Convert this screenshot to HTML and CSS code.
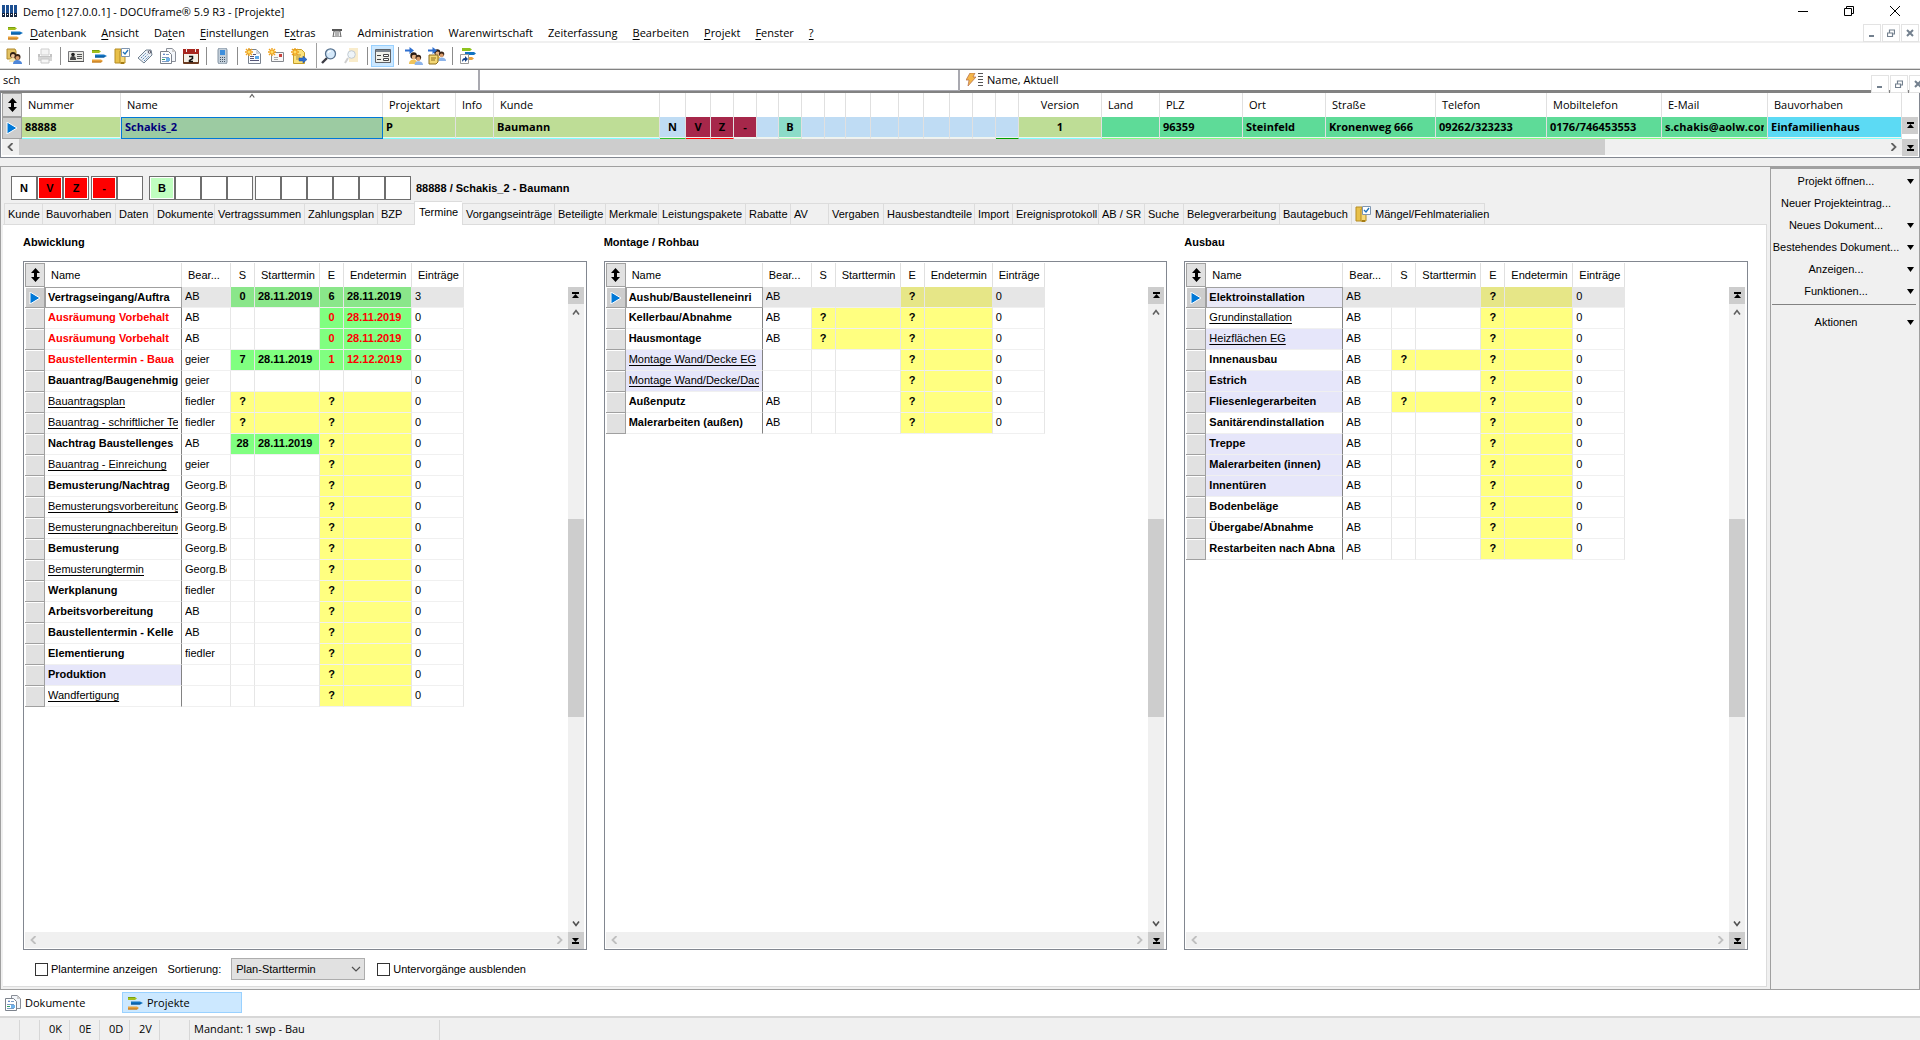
FILE: index.html
```html
<!DOCTYPE html>
<html lang="de">
<head>
<meta charset="utf-8">
<title>DOCUframe - Projekte</title>
<link rel="stylesheet" href="styles.css">
</head>
<body>
<svg class="sprite" aria-hidden="true">
  <symbol id="bars" viewBox="0 0 16 16"><path d="M1 2h7l2 1.500-2 1.500H1z" fill="#a4bf1c"/><path d="M1 2h7v1H1z" fill="#78a010"/><path d="M4 6.500h9l3 1.500-3 1.500H4z" fill="#1273c2"/><path d="M4 8.500h10l-1 1H4z" fill="#075391"/><path d="M1 11.500h9l2 1.500-2 1.500H1z" fill="#eaa23b"/><path d="M1 13.500h10l-1 1H1z" fill="#b8741e"/></symbol>
  <symbol id="app" viewBox="0 0 15 12"><path d="M0 0h3v8H0zM4 0h3v8H4zM8 0h3v8H8zM12 0h3v8h-3z" fill="#1d4f91"/><path d="M0 8h3v4H0zM4 8h3v4H4zM8 8h3v4H8zM12 8h3v4h-3z" fill="#14233c"/><path d="M1 9h1v1H1zM5 9h1v1H5zM9 9h1v1H9zM13 9h1v1h-1z" fill="#fff"/></symbol>
  <symbol id="people" viewBox="0 0 16 16"><circle cx="6" cy="6" r="3.500" fill="#2b1c14"/><circle cx="6.500" cy="7.500" r="2.500" fill="#e5b283"/><path d="M1 15c0-4 3-5 5-5s4 2 4 5z" fill="#f0c45a"/><circle cx="11" cy="8" r="3" fill="#3a2415"/><circle cx="11" cy="9.500" r="2.200" fill="#d99c6c"/><path d="M7 16c0-3 2-4 4-4s5 1 5 4z" fill="#8db4ea"/></symbol>
  <symbol id="users" viewBox="0 0 16 16"><path d="M1 1h8l1 2v8H1z" fill="#e3c263" stroke="#b08a30"/><circle cx="7" cy="7" r="3" fill="#2b1c14"/><circle cx="7" cy="8" r="2" fill="#f0c69b"/><path d="M3 14c0-3 2-4 4-4s4 1 4 4z" fill="#f5e6b0"/><circle cx="11.500" cy="9" r="3" fill="#3a2415"/><circle cx="11.500" cy="10" r="2" fill="#d99c6c"/><path d="M7 16c0-3 2-4 4-4s5 1 5 4z" fill="#4e86d8"/></symbol>
  <symbol id="printer" viewBox="0 0 16 16"><path d="M4 1h8v6H4z" fill="#f4f4f4" stroke="#cfcfcf"/><path d="M1 6h2v2h10V6h2v6H1z" fill="#c4c4c4"/><path d="M1 9h14v4H1z" fill="#d6d6d6"/><path d="M4 11h8v4H4z" fill="#f6f6f6" stroke="#c8c8c8"/></symbol>
  <symbol id="card" viewBox="0 0 16 16"><path d="M.5 3.500h15v10H.5z" fill="#e9e9e4" stroke="#77777a"/><path d="M0 13h16v1H0z" fill="#555"/><circle cx="5" cy="6.500" r="1.800" fill="#222"/><path d="M2 12c0-3 1-4 3-4s3 1 3 4z" fill="#444"/><path d="M9 6h5v1H9zM9 8h5v1H9zM9 10h5v1H9z" fill="#555"/></symbol>
  <symbol id="folder" viewBox="0 0 16 16"><path d="M1 1h6v14H1z" fill="#e8c04a" stroke="#b58c23"/><path d="M6 3h5v12H6z" fill="#f6d877" stroke="#b58c23"/><path d="M7.500.5h8v8h-8z" fill="#fff" stroke="#8096b0"/><path d="m9 4 2 2 3-4" fill="none" stroke="#1f71b8" stroke-width="1.300"/><path d="M7 14h3v2H7z" fill="#a67c14"/></symbol>
  <symbol id="tag" viewBox="0 0 16 16"><path d="m1 10 8-8 5 0 1 5-8 8z" fill="#eef2f7" stroke="#70808f"/><circle cx="12.500" cy="4" r="1.300" fill="#fff" stroke="#556"/><path d="m4 10 5-5M5.500 11.500l5-5M7 13l5-5" stroke="#5b86b5" stroke-dasharray="2 1"/></symbol>
  <symbol id="docs" viewBox="0 0 16 16"><path d="M6.500.5h6l3 3v10h-9z" fill="#f3f6fa" stroke="#8a8f98"/><path d="M12 0v4h4" fill="#ccc"/><path d="M.5 3.500h8l3 3v9H.5z" fill="#fff" stroke="#7c828c"/><path d="m3 7 1-2 1 2z" fill="#36b"/><path d="M6 6h3v1H6zM2 9h7v1H2zM2 13h7v1H2z" fill="#7c9cc4"/><path d="M2 11h3v1H2z" fill="#2a9e64"/><path d="M6 10h4v3H6z" fill="#6fb3ec"/></symbol>
  <symbol id="cal" viewBox="0 0 16 16"><path d="M.5 1.500h15v14H.5z" fill="#f4f0e6" stroke="#6b3a20"/><path d="M0 1h16v5H0z" fill="#a8261e"/><path d="M3 0h1v4H3zM12 0h1v4h-1z" fill="#eee"/><path d="M1 15h14" stroke="#6b3a20" stroke-width="2"/><path d="M6 8.500h3.500v2l-3 2v1H10" fill="none" stroke="#111" stroke-width="1.500"/></symbol>
  <symbol id="mobile" viewBox="0 0 16 16"><rect x="4" y="0" width="9" height="16" rx="2" fill="#c3cfda" stroke="#8494a3"/><path d="M6 2h5v5H6z" fill="#3f8fdc"/><path d="M6 9h1v1H6zM8 9h1v1H8zM10 9h1v1h-1zM6 11h1v1H6zM8 11h1v1H8zM10 11h1v1h-1zM6 13h1v1H6zM8 13h1v1H8zM10 13h1v1h-1z" fill="#4a5968"/></symbol>
  <symbol id="star" viewBox="0 0 8 8"><path d="M4 0v8M0 4h8M1 1l6 6M7 1 1 7" stroke="#f0a21c" stroke-width="1.400"/><circle cx="4" cy="4" r="1.500" fill="#ffe06a"/></symbol>
  <symbol id="newdoc" viewBox="0 0 16 16"><path d="M3.500 1.500h8l4 4v10h-12z" fill="#fafcff" stroke="#7a828e"/><path d="M11 1v5h5" fill="#ccd3dc"/><path d="M8 6h3v1H8zM5 8h4v1H5zM5 10h4v1H5zM5 12h9v1H5z" fill="#557"/><path d="M10 8h4v3h-4z" fill="#5aa8ea"/><use href="#star" width="8" height="8"/></symbol>
  <symbol id="newmail" viewBox="0 0 16 16"><path d="M3.500 4.500h12v9h-12z" fill="#f7f7f7" stroke="#85888e"/><path d="M11 6h3v3h-3z" fill="#c8413c"/><path d="M6 9h4v1H6zM6 11h4v1H6z" fill="#aaa"/><use href="#star" width="8" height="8"/></symbol>
  <symbol id="newnote" viewBox="0 0 16 16"><path d="M2.500 1.500h8l3 3v11h-11z" fill="#fbe27c" stroke="#c79f2a"/><path d="M5 7h5M5 9h4M5 11h3" stroke="#b99438"/><path d="M8 10h4V8l4 3.500-4 3.500v-2H8z" fill="#2e6fd0" stroke="#174a9c" stroke-width=".5"/><use href="#star" width="8" height="8"/></symbol>
  <symbol id="loupe" viewBox="0 0 16 16"><path d="m6 10-5 5" stroke="#3c3c44" stroke-width="2.400"/><circle cx="9.500" cy="5.800" r="5" fill="#d5e9fa" stroke="#56718e" stroke-width="1.300"/><path d="M7 5c.5-2 2-2 3-2" stroke="#fff" stroke-width="1.200" fill="none"/></symbol>
  <symbol id="loupeoff" viewBox="0 0 16 16"><path d="M5 0h9v14H5z" fill="#f9eccb"/><path d="m4 10-3 5" stroke="#cfcfcf" stroke-width="2"/><circle cx="7.500" cy="6.500" r="3.800" fill="#eef4f8" stroke="#c2cbd2"/></symbol>
  <symbol id="form" viewBox="0 0 16 16"><path d="M.5 1.500h15v13H.5z" fill="#f1f1ea" stroke="#5f6368"/><path d="M1 2h14v2H1z" fill="#7c858e"/><path d="M2 7h4v1H2zM2 11h4v1H2z" fill="#444"/><path d="M8.500 6.500h5v2h-5zM8.500 10.500h5v2h-5z" fill="#fff" stroke="#444"/></symbol>
  <symbol id="go" viewBox="0 0 9 7"><path d="M0 2.500h4.500V0L9 3.500 4.500 7V4.500H0z" fill="#2e6fd0"/></symbol>
  <symbol id="gopeople" viewBox="0 0 18 18"><use href="#people" x="3" y="3" width="15" height="15"/><use href="#go" width="9" height="7"/></symbol>
  <symbol id="gonote" viewBox="0 0 18 18"><use href="#people" x="4" y="0" width="14" height="14"/><path d="M1 8h9v7l-2 2H1z" fill="#f3d774" stroke="#8d6f1c"/><path d="M3 11h5M3 13h4" stroke="#8d6f1c"/><use href="#go" width="9" height="7"/></symbol>
  <symbol id="shortcut" viewBox="0 0 16 16"><path d="M2 0h8l2 1.500L10 3H2z" fill="#8fc31f"/><path d="M5 4h9l2 1.500L14 7H5z" fill="#1273c2"/><path d="M7 9h5l2 1.500-2 1.500H7z" fill="#eaa23b"/><path d="M.5 6.500h8v9h-8z" fill="#fff" stroke="#999"/><path d="M2 14c0-3 1-4 3-4V8l3 3-3 3v-2c-2 0-2 1-3 2z" fill="#113f86"/></symbol>
  <symbol id="phone" viewBox="0 0 10 9"><path d="M0 1h10v2H0z" fill="#555"/><path d="M2 3h6l1 6H1z" fill="#eee" stroke="#666"/><path d="M3 5h4M3 7h4" stroke="#777"/></symbol>
  <symbol id="flash" viewBox="0 0 10 14"><path d="M4 0h5L7 4h3L2 13l1-6H0z" fill="#f4b64a" stroke="#b36b45" stroke-width=".7"/></symbol>
  <symbol id="updown" viewBox="0 0 9 14"><path d="M4.500 0 9 5H6v4h3l-4.500 5L0 9h3V5H0z"/></symbol>
  <symbol id="current" viewBox="0 0 12 12"><path d="M1 0v12l10-6z" fill="#0078d7" stroke="#fff"/></symbol>
  <symbol id="totop" viewBox="0 0 7 7"><path d="M0 0h7v2H0zM3.500 2 7 6H0z"/></symbol>
  <symbol id="toend" viewBox="0 0 7 7"><path d="M0 5h7v2H0zM3.500 5 7 1H0z"/></symbol>
  <symbol id="up" viewBox="0 0 8 8"><path d="M1 6l3-4 3 4" fill="none" stroke="#606060" stroke-width="1.600"/></symbol>
  <symbol id="down" viewBox="0 0 8 8"><path d="M1 2l3 4 3-4" fill="none" stroke="#505050" stroke-width="1.600"/></symbol>
  <symbol id="left" viewBox="0 0 8 8"><path d="M6 0 2 4l4 4" fill="none" stroke="currentColor" stroke-width="1.800"/></symbol>
  <symbol id="right" viewBox="0 0 8 8"><path d="m2 0 4 4-4 4" fill="none" stroke="currentColor" stroke-width="1.800"/></symbol>
  <symbol id="chevron" viewBox="0 0 10 9"><path d="m1 2 4 4 4-4" fill="none" stroke="#505050" stroke-width="1.200"/></symbol>
  <symbol id="tri" viewBox="0 0 7 5"><path d="M0 0h7L3.500 5z"/></symbol>
  <symbol id="wmin" viewBox="0 0 10 10"><path d="M0 5h10v1H0z"/></symbol>
  <symbol id="wmax" viewBox="0 0 10 10"><path d="M.5 2.500h7v7h-7zM2.500 2V.5h7v7H8" fill="none" stroke="#000"/></symbol>
  <symbol id="wclose" viewBox="0 0 10 10"><path d="m0 0 10 10M10 0 0 10" stroke="#000"/></symbol>
  <symbol id="mmin" viewBox="0 0 8 8"><path d="M1 6h5v2H1z" fill="#73808e"/></symbol>
  <symbol id="mmax" viewBox="0 0 8 8"><path d="M.5 4h5v3.500h-5zM2.500 3.500V1h5v4H6M.5 4h5M2.500 1h5" fill="none" stroke="#73808e" stroke-width="1.200"/></symbol>
  <symbol id="mclose" viewBox="0 0 8 8"><path d="m1 1 6 6M7 1 1 7" stroke="#73808e" stroke-width="2"/></symbol>
</svg>

<header class="titlebar">
  <svg class="app-icon"><use href="#app"/></svg>
  <h1>Demo [127.0.0.1] - DOCUframe® 5.9 R3 - [Projekte]</h1>
  <div class="win-buttons">
    <button aria-label="Minimieren"><svg><use href="#wmin"/></svg></button>
    <button aria-label="Verkleinern"><svg><use href="#wmax"/></svg></button>
    <button aria-label="Schließen"><svg><use href="#wclose"/></svg></button>
  </div>
</header>

<nav class="menubar">
  <svg class="i16"><use href="#bars"/></svg>
  <button><u>D</u>atenbank</button><button><u>A</u>nsicht</button><button>Da<u>t</u>en</button><button><u>E</u>instellungen</button><button>E<u>x</u>tras</button>
  <button aria-label="Telefon"><svg class="phone"><use href="#phone"/></svg></button>
  <button>Administration</button><button>Warenwirtschaft</button><button>Zeiterfassung</button><button><u>B</u>earbeiten</button><button><u>P</u>rojekt</button><button><u>F</u>enster</button><button><u>?</u></button>
  <div class="mdi">
    <button aria-label="Minimieren"><svg><use href="#mmin"/></svg></button>
    <button aria-label="Wiederherstellen"><svg><use href="#mmax"/></svg></button>
    <button aria-label="Schließen"><svg><use href="#mclose"/></svg></button>
  </div>
</nav>

<div class="toolbar">
  <button aria-label="Benutzer"><svg class="i16"><use href="#users"/></svg></button><i></i>
  <button aria-label="Drucken"><svg class="i16"><use href="#printer"/></svg></button><i></i>
  <button aria-label="Adressen"><svg class="i16"><use href="#card"/></svg></button>
  <button aria-label="Projekte"><svg class="i16"><use href="#bars"/></svg></button>
  <button aria-label="Mängel"><svg class="i16"><use href="#folder"/></svg></button>
  <button aria-label="Artikel"><svg class="i16"><use href="#tag"/></svg></button>
  <button aria-label="Dokumente"><svg class="i16"><use href="#docs"/></svg></button>
  <button aria-label="Kalender"><svg class="i16"><use href="#cal"/></svg></button><i></i>
  <button aria-label="Mobil"><svg class="i16"><use href="#mobile"/></svg></button><i></i>
  <button aria-label="Neues Dokument"><svg class="i16"><use href="#newdoc"/></svg></button>
  <button aria-label="Neue E-Mail"><svg class="i16"><use href="#newmail"/></svg></button>
  <button aria-label="Neue Notiz"><svg class="i16"><use href="#newnote"/></svg></button><i class="tall"></i>
  <button aria-label="Suchen"><svg class="i16"><use href="#loupe"/></svg></button>
  <button aria-label="Weitersuchen"><svg class="i16"><use href="#loupeoff"/></svg></button><i></i>
  <button class="on" aria-label="Formularansicht"><svg class="i16"><use href="#form"/></svg></button><i></i>
  <button aria-label="Zu Adresse"><svg class="i18"><use href="#gopeople"/></svg></button>
  <button aria-label="Zu Notiz"><svg class="i18"><use href="#gonote"/></svg></button><i></i>
  <button aria-label="Verknüpfung"><svg class="i16"><use href="#shortcut"/></svg></button>
</div>

<div class="filters">
  <input value="sch" aria-label="Suchbegriff 1">
  <input aria-label="Suchbegriff 2">
  <div class="sort-by"><svg class="flash"><use href="#flash"/></svg><span class="grip"></span><span>Name, Aktuell</span></div>
  <div class="mdi over">
    <button aria-label="Minimieren"><svg><use href="#mmin"/></svg></button>
    <button aria-label="Wiederherstellen"><svg><use href="#mmax"/></svg></button>
    <button class="cut" aria-label="Schließen"><svg><use href="#mclose"/></svg></button>
  </div>
</div>

<section class="projects">
  <div class="projects-body">
    <table class="pt">
      <colgroup><col class="w20"><col class="w99"><col class="w262"><col class="w73"><col class="w38"><col class="w166"><col class="w26"><col class="w25"><col class="w23"><col class="w23"><col class="w22"><col class="w23"><col class="w23"><col class="w21"><col class="w25"><col class="w28"><col class="w25"><col class="w26"><col class="w23"><col class="w23"><col class="w23"><col class="w83"><col class="w58"><col class="w83"><col class="w83"><col class="w110"><col class="w111"><col class="w115"><col class="w106"><col></colgroup>
      <thead><tr><th class="corner"><svg><use href="#updown"/></svg></th><th>Nummer</th><th class="sorted">Name<svg><use href="#up"/></svg></th><th>Projektart</th><th>Info</th><th>Kunde</th><th></th><th></th><th></th><th></th><th></th><th></th><th></th><th></th><th></th><th></th><th></th><th></th><th></th><th></th><th></th><th class="mid">Version</th><th>Land</th><th>PLZ</th><th>Ort</th><th>Straße</th><th>Telefon</th><th>Mobiltelefon</th><th>E-Mail</th><th>Bauvorhaben</th></tr></thead>
      <tbody><tr><th class="rowhead"><svg><use href="#current"/></svg></th><td class="olive">88888</td><td class="picked">Schakis_2</td><td class="olive">P</td><td class="olive"></td><td class="olive">Baumann</td><td class="sky mid ok">N</td><td class="wine mid">V</td><td class="wine mid">Z</td><td class="wine mid plain">-</td><td class="sky"></td><td class="mint mid">B</td><td class="sky"></td><td class="sky"></td><td class="sky"></td><td class="sky"></td><td class="sky"></td><td class="sky"></td><td class="sky"></td><td class="sky"></td><td class="sky done"></td><td class="olive mid">1</td><td class="green"></td><td class="green">96359</td><td class="green">Steinfeld</td><td class="green">Kronenweg 666</td><td class="green">09262/323233</td><td class="green">0176/746453553</td><td class="green"><span>s.chakis@aolw.com</span></td><td class="cyan">Einfamilienhaus</td></tr></tbody>
    </table>
    <div class="pt-side"><button class="jump" aria-label="Zum Anfang"><svg><use href="#totop"/></svg></button></div>
  </div>
  <div class="hscroll live"><svg><use href="#left"/></svg><span class="track"><span class="hthumb"></span></span><svg><use href="#right"/></svg><button class="jump" aria-label="Zum Ende"><svg><use href="#toend"/></svg></button></div>
</section>

<main class="workspace">
  <div class="detail">
    <div class="status-line">
      <div class="boxes"><span>N</span><span class="red">V</span><span class="red">Z</span></div>
      <div class="boxes"><span class="red">-</span><span></span></div>
      <div class="boxes apart"><span class="pale">B</span><span></span><span></span><span></span></div>
      <div class="boxes"><span></span><span></span><span></span><span></span><span></span><span></span></div>
      <h2>88888 / Schakis_2 - Baumann</h2>
    </div>
    <div class="tabs" role="tablist">
      <button role="tab">Kunde</button><button role="tab">Bauvorhaben</button><button role="tab">Daten</button><button role="tab">Dokumente</button><button role="tab">Vertragssummen</button><button role="tab">Zahlungsplan</button><button role="tab">BZP</button><button role="tab" aria-selected="true">Termine</button><button role="tab">Vorgangseinträge</button><button role="tab">Beteiligte</button><button role="tab">Merkmale</button><button role="tab">Leistungspakete</button><button role="tab">Rabatte</button><button role="tab">AV</button><button role="tab">Vergaben</button><button role="tab">Hausbestandteile</button><button role="tab">Import</button><button role="tab">Ereignisprotokoll</button><button role="tab">AB / SR</button><button role="tab">Suche</button><button role="tab">Belegverarbeitung</button><button role="tab">Bautagebuch</button><button role="tab"><svg class="i16"><use href="#folder"/></svg>Mängel/Fehlmaterialien</button>
    </div>
    <div class="pane">
      <div class="lists">
        <section class="list">
          <h3>Abwicklung</h3>
          <div class="frame">
            <div class="rows">
              <table class="tt">
                <thead><tr><th class="corner"><svg><use href="#updown"/></svg></th><th>Name</th><th>Bear...</th><th>S</th><th>Starttermin</th><th>E</th><th>Endetermin</th><th>Einträge</th></tr></thead>
                <tbody>
                <tr class="sel"><th><svg><use href="#current"/></svg></th><td><span>Vertragseingang/Auftra</span></td><td><span>AB</span></td><td class="g">0</td><td class="g">28.11.2019</td><td class="g">6</td><td class="g">28.11.2019</td><td>3</td></tr>
                <tr><th></th><td class="r"><span>Ausräumung Vorbehalt</span></td><td><span>AB</span></td><td></td><td></td><td class="g r">0</td><td class="g r">28.11.2019</td><td>0</td></tr>
                <tr><th></th><td class="r"><span>Ausräumung Vorbehalt</span></td><td><span>AB</span></td><td></td><td></td><td class="g r">0</td><td class="g r">28.11.2019</td><td>0</td></tr>
                <tr><th></th><td class="r"><span>Baustellentermin - Baua</span></td><td><span>geier</span></td><td class="g">7</td><td class="g">28.11.2019</td><td class="g r">1</td><td class="g r">12.12.2019</td><td>0</td></tr>
                <tr><th></th><td><span>Bauantrag/Baugenehmig</span></td><td><span>geier</span></td><td></td><td></td><td></td><td></td><td>0</td></tr>
                <tr><th></th><td class="sub"><span>Bauantragsplan</span></td><td><span>fiedler</span></td><td class="y">?</td><td class="y"></td><td class="y">?</td><td class="y"></td><td>0</td></tr>
                <tr><th></th><td class="sub"><span>Bauantrag - schriftlicher Te</span></td><td><span>fiedler</span></td><td class="y">?</td><td class="y"></td><td class="y">?</td><td class="y"></td><td>0</td></tr>
                <tr><th></th><td><span>Nachtrag Baustellenges</span></td><td><span>AB</span></td><td class="g">28</td><td class="g">28.11.2019</td><td class="y">?</td><td class="y"></td><td>0</td></tr>
                <tr><th></th><td class="sub"><span>Bauantrag - Einreichung</span></td><td><span>geier</span></td><td></td><td></td><td class="y">?</td><td class="y"></td><td>0</td></tr>
                <tr><th></th><td><span>Bemusterung/Nachtrag</span></td><td><span>Georg.Be</span></td><td></td><td></td><td class="y">?</td><td class="y"></td><td>0</td></tr>
                <tr><th></th><td class="sub"><span>Bemusterungsvorbereitung</span></td><td><span>Georg.Be</span></td><td></td><td></td><td class="y">?</td><td class="y"></td><td>0</td></tr>
                <tr><th></th><td class="sub"><span>Bemusterungnachbereitung</span></td><td><span>Georg.Be</span></td><td></td><td></td><td class="y">?</td><td class="y"></td><td>0</td></tr>
                <tr><th></th><td><span>Bemusterung</span></td><td><span>Georg.Be</span></td><td></td><td></td><td class="y">?</td><td class="y"></td><td>0</td></tr>
                <tr><th></th><td class="sub"><span>Bemusterungtermin</span></td><td><span>Georg.Be</span></td><td></td><td></td><td class="y">?</td><td class="y"></td><td>0</td></tr>
                <tr><th></th><td><span>Werkplanung</span></td><td><span>fiedler</span></td><td></td><td></td><td class="y">?</td><td class="y"></td><td>0</td></tr>
                <tr><th></th><td><span>Arbeitsvorbereitung</span></td><td><span>AB</span></td><td></td><td></td><td class="y">?</td><td class="y"></td><td>0</td></tr>
                <tr><th></th><td><span>Baustellentermin - Kelle</span></td><td><span>AB</span></td><td></td><td></td><td class="y">?</td><td class="y"></td><td>0</td></tr>
                <tr><th></th><td><span>Elementierung</span></td><td><span>fiedler</span></td><td></td><td></td><td class="y">?</td><td class="y"></td><td>0</td></tr>
                <tr><th></th><td class="lav"><span>Produktion</span></td><td></td><td></td><td></td><td class="y">?</td><td class="y"></td><td>0</td></tr>
                <tr><th></th><td class="sub"><span>Wandfertigung</span></td><td></td><td></td><td></td><td class="y">?</td><td class="y"></td><td>0</td></tr>
                </tbody>
              </table>
              <div class="vscroll"><button class="jump" aria-label="Zum Anfang"><svg><use href="#totop"/></svg></button><svg><use href="#up"/></svg><span class="vtrack"><span class="vthumb"></span></span><svg><use href="#down"/></svg></div>
            </div>
            <div class="hscroll"><svg><use href="#left"/></svg><span class="track"></span><svg><use href="#right"/></svg><button class="jump" aria-label="Zum Ende"><svg><use href="#toend"/></svg></button></div>
          </div>
        </section>
        <section class="list">
          <h3>Montage / Rohbau</h3>
          <div class="frame">
            <div class="rows">
              <table class="tt">
                <thead><tr><th class="corner"><svg><use href="#updown"/></svg></th><th>Name</th><th>Bear...</th><th>S</th><th>Starttermin</th><th>E</th><th>Endetermin</th><th>Einträge</th></tr></thead>
                <tbody>
                <tr class="sel"><th><svg><use href="#current"/></svg></th><td><span>Aushub/Baustelleneinri</span></td><td><span>AB</span></td><td></td><td></td><td class="y">?</td><td class="y"></td><td>0</td></tr>
                <tr><th></th><td><span>Kellerbau/Abnahme</span></td><td><span>AB</span></td><td class="y">?</td><td class="y"></td><td class="y">?</td><td class="y"></td><td>0</td></tr>
                <tr><th></th><td><span>Hausmontage</span></td><td><span>AB</span></td><td class="y">?</td><td class="y"></td><td class="y">?</td><td class="y"></td><td>0</td></tr>
                <tr><th></th><td class="sub lav"><span>Montage Wand/Decke EG</span></td><td></td><td></td><td></td><td class="y">?</td><td class="y"></td><td>0</td></tr>
                <tr><th></th><td class="sub lav"><span>Montage Wand/Decke/Dach</span></td><td></td><td></td><td></td><td class="y">?</td><td class="y"></td><td>0</td></tr>
                <tr><th></th><td><span>Außenputz</span></td><td><span>AB</span></td><td></td><td></td><td class="y">?</td><td class="y"></td><td>0</td></tr>
                <tr><th></th><td><span>Malerarbeiten (außen)</span></td><td><span>AB</span></td><td></td><td></td><td class="y">?</td><td class="y"></td><td>0</td></tr>
                </tbody>
              </table>
              <div class="vscroll"><button class="jump" aria-label="Zum Anfang"><svg><use href="#totop"/></svg></button><svg><use href="#up"/></svg><span class="vtrack"><span class="vthumb"></span></span><svg><use href="#down"/></svg></div>
            </div>
            <div class="hscroll"><svg><use href="#left"/></svg><span class="track"></span><svg><use href="#right"/></svg><button class="jump" aria-label="Zum Ende"><svg><use href="#toend"/></svg></button></div>
          </div>
        </section>
        <section class="list">
          <h3>Ausbau</h3>
          <div class="frame">
            <div class="rows">
              <table class="tt">
                <thead><tr><th class="corner"><svg><use href="#updown"/></svg></th><th>Name</th><th>Bear...</th><th>S</th><th>Starttermin</th><th>E</th><th>Endetermin</th><th>Einträge</th></tr></thead>
                <tbody>
                <tr class="sel"><th><svg><use href="#current"/></svg></th><td class="lav"><span>Elektroinstallation</span></td><td><span>AB</span></td><td></td><td></td><td class="y">?</td><td class="y"></td><td>0</td></tr>
                <tr><th></th><td class="sub"><span>Grundinstallation</span></td><td><span>AB</span></td><td></td><td></td><td class="y">?</td><td class="y"></td><td>0</td></tr>
                <tr><th></th><td class="sub lav"><span>Heizflächen EG</span></td><td><span>AB</span></td><td></td><td></td><td class="y">?</td><td class="y"></td><td>0</td></tr>
                <tr><th></th><td><span>Innenausbau</span></td><td><span>AB</span></td><td class="y">?</td><td class="y"></td><td class="y">?</td><td class="y"></td><td>0</td></tr>
                <tr><th></th><td class="lav"><span>Estrich</span></td><td><span>AB</span></td><td></td><td></td><td class="y">?</td><td class="y"></td><td>0</td></tr>
                <tr><th></th><td class="lav"><span>Fliesenlegerarbeiten</span></td><td><span>AB</span></td><td class="y">?</td><td class="y"></td><td class="y">?</td><td class="y"></td><td>0</td></tr>
                <tr><th></th><td><span>Sanitärendinstallation</span></td><td><span>AB</span></td><td></td><td></td><td class="y">?</td><td class="y"></td><td>0</td></tr>
                <tr><th></th><td class="lav"><span>Treppe</span></td><td><span>AB</span></td><td></td><td></td><td class="y">?</td><td class="y"></td><td>0</td></tr>
                <tr><th></th><td class="lav"><span>Malerarbeiten (innen)</span></td><td><span>AB</span></td><td></td><td></td><td class="y">?</td><td class="y"></td><td>0</td></tr>
                <tr><th></th><td class="lav"><span>Innentüren</span></td><td><span>AB</span></td><td></td><td></td><td class="y">?</td><td class="y"></td><td>0</td></tr>
                <tr><th></th><td><span>Bodenbeläge</span></td><td><span>AB</span></td><td></td><td></td><td class="y">?</td><td class="y"></td><td>0</td></tr>
                <tr><th></th><td><span>Übergabe/Abnahme</span></td><td><span>AB</span></td><td></td><td></td><td class="y">?</td><td class="y"></td><td>0</td></tr>
                <tr><th></th><td><span>Restarbeiten nach Abna</span></td><td><span>AB</span></td><td></td><td></td><td class="y">?</td><td class="y"></td><td>0</td></tr>
                </tbody>
              </table>
              <div class="vscroll"><button class="jump" aria-label="Zum Anfang"><svg><use href="#totop"/></svg></button><svg><use href="#up"/></svg><span class="vtrack"><span class="vthumb"></span></span><svg><use href="#down"/></svg></div>
            </div>
            <div class="hscroll"><svg><use href="#left"/></svg><span class="track"></span><svg><use href="#right"/></svg><button class="jump" aria-label="Zum Ende"><svg><use href="#toend"/></svg></button></div>
          </div>
        </section>
      </div>
      <form class="options">
        <label class="check"><input type="checkbox">Plantermine anzeigen</label>
        <label for="sort">Sortierung:</label>
        <span class="drop"><select id="sort"><option>Plan-Starttermin</option></select><svg><use href="#chevron"/></svg></span>
        <label class="check"><input type="checkbox">Untervorgänge ausblenden</label>
      </form>
    </div>
  </div>
  <aside class="actions">
    <button><span>Projekt öffnen...</span><svg><use href="#tri"/></svg></button>
    <button><span>Neuer Projekteintrag...</span></button>
    <button><span>Neues Dokument...</span><svg><use href="#tri"/></svg></button>
    <button><span>Bestehendes Dokument...</span><svg><use href="#tri"/></svg></button>
    <button><span>Anzeigen...</span><svg><use href="#tri"/></svg></button>
    <button><span>Funktionen...</span><svg><use href="#tri"/></svg></button>
    <hr>
    <button><span>Aktionen</span><svg><use href="#tri"/></svg></button>
  </aside>
</main>

<nav class="windows">
  <button><svg class="i16"><use href="#docs"/></svg>Dokumente</button>
  <button class="active"><svg class="i16"><use href="#bars"/></svg>Projekte</button>
</nav>
<footer class="statusbar"><span></span><span></span><span>0K</span><span>0E</span><span>0D</span><span>2V</span><span></span><span>Mandant: 1 swp - Bau</span></footer>
</body>
</html>
```
FILE: styles.css
```css
* { box-sizing: border-box; }
body {
  margin: 0;
  min-height: 100vh;
  display: flex;
  flex-direction: column;
  background: #f0f0f0;
  color: #000;
  font: 11px/16px "Open Sans", "Noto Sans", sans-serif;
}
button, input, select { font: inherit; color: inherit; margin: 0; padding: 0; border: 0; background: none; border-radius: 0; }
h1, h2, h3 { margin: 0; font-size: inherit; }
svg { display: block; flex: none; }
.sprite { position: absolute; width: 0; height: 0; }
.i16 { width: 16px; height: 16px; }
.i18 { width: 18px; height: 18px; }

/* title bar */
.titlebar { display: flex; align-items: center; height: 22px; padding-left: 2px; background: #fff; }
.titlebar h1 { flex: 1; margin-left: 6px; font-weight: 400; padding-top: 2px; }
.app-icon { width: 15px; height: 12px; }
.win-buttons { display: flex; padding-right: 2px; }
.win-buttons button { display: grid; place-items: center; width: 46px; height: 20px; }
.win-buttons svg { width: 10px; height: 10px; }

/* menu bar */
.menubar { display: flex; align-items: center; gap: 15px; height: 21px; padding: 2px 0 0 7px; background: #fff; border-bottom: 2px solid #f0f0f0; }
.menubar > svg { margin-right: -8px; }
.menubar u { text-underline-offset: 2px; }
.phone { width: 10px; height: 9px; margin: 0 1px; }
.mdi { display: flex; gap: 1px; margin-left: auto; padding-right: 1px; }
.mdi button { display: grid; place-items: center; width: 18px; height: 18px; border: 1px solid #e3e3e3; background: #fff; overflow: hidden; }
.mdi svg { width: 8px; height: 8px; }
.mdi.over { position: absolute; right: 0; top: 5px; padding: 0; }
.mdi .cut { width: 11px; border-right: 0; justify-content: start; padding-left: 4px; }

/* tool bar */
.toolbar { display: flex; align-items: center; height: 26px; padding-left: 2px; background: #fff; border-bottom: 1px solid #d8d8d8; }
.toolbar button { display: grid; place-items: center; width: 23px; height: 22px; }
.toolbar .on { background: #cce8ff; border: 1px solid #99d1ff; }
.toolbar i { width: 1px; height: 18px; margin: 0 3px 0 4px; background: #8c8c8c; }
.toolbar i.tall { height: 25px; margin: 0 0 0 6px; background: #a0a0a0; }

/* filter row */
.filters { position: relative; display: grid; grid-template-columns: 1fr 1fr 2fr; height: 22px; background: #fff; border-top: 1px solid #828282; }
.filters input { min-width: 0; padding-left: 3px; background: #fff; border-right: 2px solid #a9a9b0; border-bottom: 1px solid #a9a9b0; outline: 0; }
.sort-by { display: flex; align-items: center; gap: 2px; padding-left: 6px; border-bottom: 1px solid #828282; }
.sort-by span:last-child { margin-left: 2px; }
.flash { width: 10px; height: 14px; }
.grip { width: 5px; height: 15px; background: repeating-linear-gradient(#555 0 1px, #fff 1px 3px); }

/* project table */
.projects { border: 1px solid #828790; border-top: 2px solid #828282; background: #fff; padding: 0 1px 1px; }
.projects-body { display: flex; }
.pt { flex: 1; min-width: 0; table-layout: fixed; border-collapse: separate; border-spacing: 0; width: 100%; }
.w20 { width: 20px; } .w21 { width: 21px; } .w22 { width: 22px; } .w23 { width: 23px; } .w25 { width: 25px; } .w26 { width: 26px; } .w28 { width: 28px; }
.w38 { width: 38px; } .w58 { width: 58px; } .w73 { width: 73px; } .w83 { width: 83px; } .w99 { width: 99px; } .w106 { width: 106px; }
.w110 { width: 110px; } .w111 { width: 111px; } .w115 { width: 115px; } .w166 { width: 166px; } .w262 { width: 262px; }
.pt th, .pt td { padding: 0 0 0 3px; text-align: left; white-space: nowrap; overflow: hidden; }
.pt thead th { height: 24px; padding-left: 6px; font-weight: 400; border-right: 1px solid #e0e0e0; position: relative; }
.pt td { height: 22px; padding-bottom: 2px; font-weight: 700; border-right: 1px solid #e0e0e0; border-bottom: 1px solid #80ffff; box-shadow: inset 0 -1px #eef5ee; }
.pt td span { display: block; margin-right: 3px; overflow: hidden; }
.pt .mid { text-align: center; padding-left: 0; }
.pt .corner, .pt .rowhead { padding: 0; border: 1px solid #a0a0a0; background: #e1e1e1; }
.pt .rowhead { background: #cdcdcd; }
.corner svg { width: 9px; height: 14px; margin: auto; }
.rowhead svg { width: 12px; height: 12px; margin: auto; }
.sorted svg { position: absolute; left: 127px; top: 0; width: 8px; height: 6px; }
.pt .olive { background: #bedd96; }
.pt .picked { background: #9ccba2; color: #00007c; border: 1px solid #0078d7; box-shadow: none; }
.pt .sky { background: #bfdcf4; border-bottom-color: #f0f0f0; }
.pt .ok { border-bottom-color: #30c030; }
.pt .done { border-bottom-color: #00a000; }
.pt .wine { background: #a6274a; border-bottom-color: #f00; }
.pt .plain { border-bottom-color: #f0f0f0; }
.pt .mint { background: #8cdcc8; border-bottom-color: #c0ffc0; }
.pt .green { background: #5edb98; border-bottom-color: #80ff80; }
.pt .cyan { background: #5cdaf4; border-bottom-color: #80ffff; }
.pt-side { padding-top: 24px; }
.jump { display: grid; place-items: center; width: 16px; height: 17px; background: #cdcdcd; }
.jump svg { width: 7px; height: 7px; }

.hscroll { display: flex; align-items: flex-start; height: 17px; color: #bfbfbf; }
.hscroll > svg { width: 17px; height: 16px; padding: 4px; background: #f0f0f0; }
.hscroll .track { flex: 1; height: 16px; background: #f0f0f0; }
.hscroll.live { color: #606060; }
.hthumb { display: block; width: 85%; height: 16px; background: #cdcdcd; }

/* workspace */
.workspace { flex: 1; display: flex; margin-top: 8px; border: 1px solid #a0a0a0; font-family: "Liberation Sans", Arial, sans-serif; line-height: 14px; }
.detail { flex: 1; min-width: 0; display: flex; flex-direction: column; padding: 0 3px 2px 2px; }
.status-line { display: flex; gap: 2px; padding: 9px 0 0 8px; height: 33px; }
.boxes { display: flex; height: 24px; }
.boxes.apart { margin-left: 4px; }
.boxes span { display: grid; place-items: center; width: 26px; background: #fff; border: 1px solid #6e6e6e; box-shadow: inset 0 0 0 1px #fff; font-weight: 700; }
.boxes .red { background: #f00; }
.boxes .pale { background: #c0ffc0; }
.status-line h2 { align-self: center; margin-left: 3px; }
.tabs {
  display: grid;
  grid-template-columns: 38px 73px 38px 61px 90px 73px 37px 48px 92px 51px 53px 87px 45px 38px 55px 91px 38px 86px 46px 39px 96px 72px 134px;
  align-items: end;
  height: 24px;
  padding-left: 1px;
}
.tabs button { display: flex; align-items: center; gap: 4px; height: 21px; padding-left: 3px; white-space: nowrap; border: solid #dcdcdc; border-width: 1px 0 0 1px; }
.tabs button:last-child { border-right-width: 1px; }
.tabs [aria-selected] { height: 24px; padding: 0 0 3px 4px; background: #fff; position: relative; margin-bottom: -1px; }
.pane { flex: 1; display: flex; flex-direction: column; padding: 10px 18px 5px 20px; background: #fff; border: solid #dcdcdc; border-width: 1px 1px 1px 0; }
.lists { flex: 1; display: flex; gap: 17px; }
.list { flex: 1; min-width: 0; display: flex; flex-direction: column; }
.list h3 { height: 26px; }
.frame { flex: 1; display: flex; flex-direction: column; border: 1px solid #828790; padding: 1px 2px 0 1px; }
.rows { flex: 1; display: flex; justify-content: space-between; align-items: flex-start; }

/* task tables */
.tt { table-layout: fixed; width: 439px; border-collapse: separate; border-spacing: 0; }
.tt th, .tt td { padding: 0; text-align: left; font-weight: 400; white-space: nowrap; overflow: hidden; }
.tt thead th { height: 24px; padding-left: 6px; border-right: 1px solid #e0e0e0; }
.tt thead .corner { width: 20px; padding: 0; border: 1px solid #a0a0a0; background: #e1e1e1; }
.tt th:nth-child(2) { width: 137px; }
.tt th:nth-child(3) { width: 49px; }
.tt th:nth-child(4), .tt th:nth-child(6) { width: 24px; padding-left: 0; text-align: center; }
.tt th:nth-child(5) { width: 65px; }
.tt th:nth-child(7) { width: 68px; }
.tt th:nth-child(8) { width: 52px; }
.tt td { height: 21px; padding: 0 3px 2px; border-right: 1px solid #e6e6e6; border-bottom: 1px solid #f0f0f0; }
.tt tbody th { background: #e1e1e1; border: solid #a0a0a0; border-width: 0 1px 1px 0; box-shadow: inset 1px 1px #fff; }
.tt tbody th svg { width: 12px; height: 12px; margin: 2px 0 0 4px; }
.tt td span { display: block; overflow: hidden; }
.tt td:nth-child(2) { font-weight: 700; border-right-color: #828282; }
.tt td:nth-child(n+4):nth-child(-n+7) { font-weight: 700; }
.tt td:nth-child(4), .tt td:nth-child(6) { padding: 0 0 2px; text-align: center; }
.tt td.sub { font-weight: 400; text-decoration: underline; text-underline-offset: 2px; }
.tt .r { color: #f00; }
.tt .g { background: #80ff80; }
.tt .y { background: #ffff80; }
.tt .lav { background: #e6e6fa; }
.tt .sel th { background: #cdcdcd; }
.tt .sel td { background: #e6e6e6; }
.tt .sel td.g { background: #8ae68a; }
.tt .sel td.y { background: #e6e687; }
.tt .sel td:nth-child(2) { background: #fff; border: 1px solid #a0a0a0; padding-left: 2px; }
.tt .sel td.lav:nth-child(2) { background: #e9e9f7; }

.vscroll { align-self: stretch; display: flex; flex-direction: column; width: 16px; margin-top: 24px; background: #f0f0f0; }
.vscroll > svg { width: 16px; height: 17px; padding: 4px; }
.vtrack { flex: 1; display: flex; flex-direction: column; }
.vtrack::before, .vtrack::after { content: ""; flex: 1; }
.vthumb { flex: 1; background: #cdcdcd; }

/* options below the lists */
.options { display: flex; align-items: center; height: 31px; padding: 7px 0 0 12px; }
.options label { margin-right: 10px; }
.options .check { display: flex; align-items: center; gap: 3px; margin-right: 10px; }
.options input { appearance: none; width: 13px; height: 13px; border: 1px solid #333; background: #fff; }
.drop { position: relative; width: 134px; margin-right: 12px; }
.drop select { appearance: none; display: block; width: 100%; height: 22px; padding-left: 4px; border: 1px solid #adadad; background: #e1e1e1; }
.drop svg { position: absolute; right: 4px; top: 7px; width: 10px; height: 9px; pointer-events: none; }

/* actions */
.actions { width: 149px; padding: 3px 3px 0 1px; border-left: 1px solid #a0a0a0; box-shadow: inset 0 2px #a0a0a0; }
.actions button { display: flex; align-items: center; width: 100%; height: 22px; }
.actions button span { width: 128px; text-align: center; white-space: nowrap; }
.actions svg { width: 7px; height: 5px; margin-left: 7px; }
.actions hr { height: 1px; margin: 2px 0 6px; border: 0; background: #828282; }

/* open windows and status bar */
.windows { display: flex; height: 26px; padding: 2px 0 3px 5px; background: #fff; }
.windows button { display: flex; align-items: center; gap: 4px; width: 120px; padding-right: 3px; }
.windows button + button { margin-left: -3px; padding-left: 4px; border: 1px solid #99d1ff; background: #cce8ff; }
.statusbar { display: flex; height: 24px; padding-top: 2px; background: #f0f0f0; border-top: 2px solid #d7d7d7; }
.statusbar span { width: 30px; padding-left: 9px; line-height: 18px; border-right: 1px solid #d7d7d7; }
.statusbar span:first-child, .statusbar span:nth-child(2) { width: 20px; }
.statusbar span:last-child { width: 250px; padding-left: 4px; }
```
